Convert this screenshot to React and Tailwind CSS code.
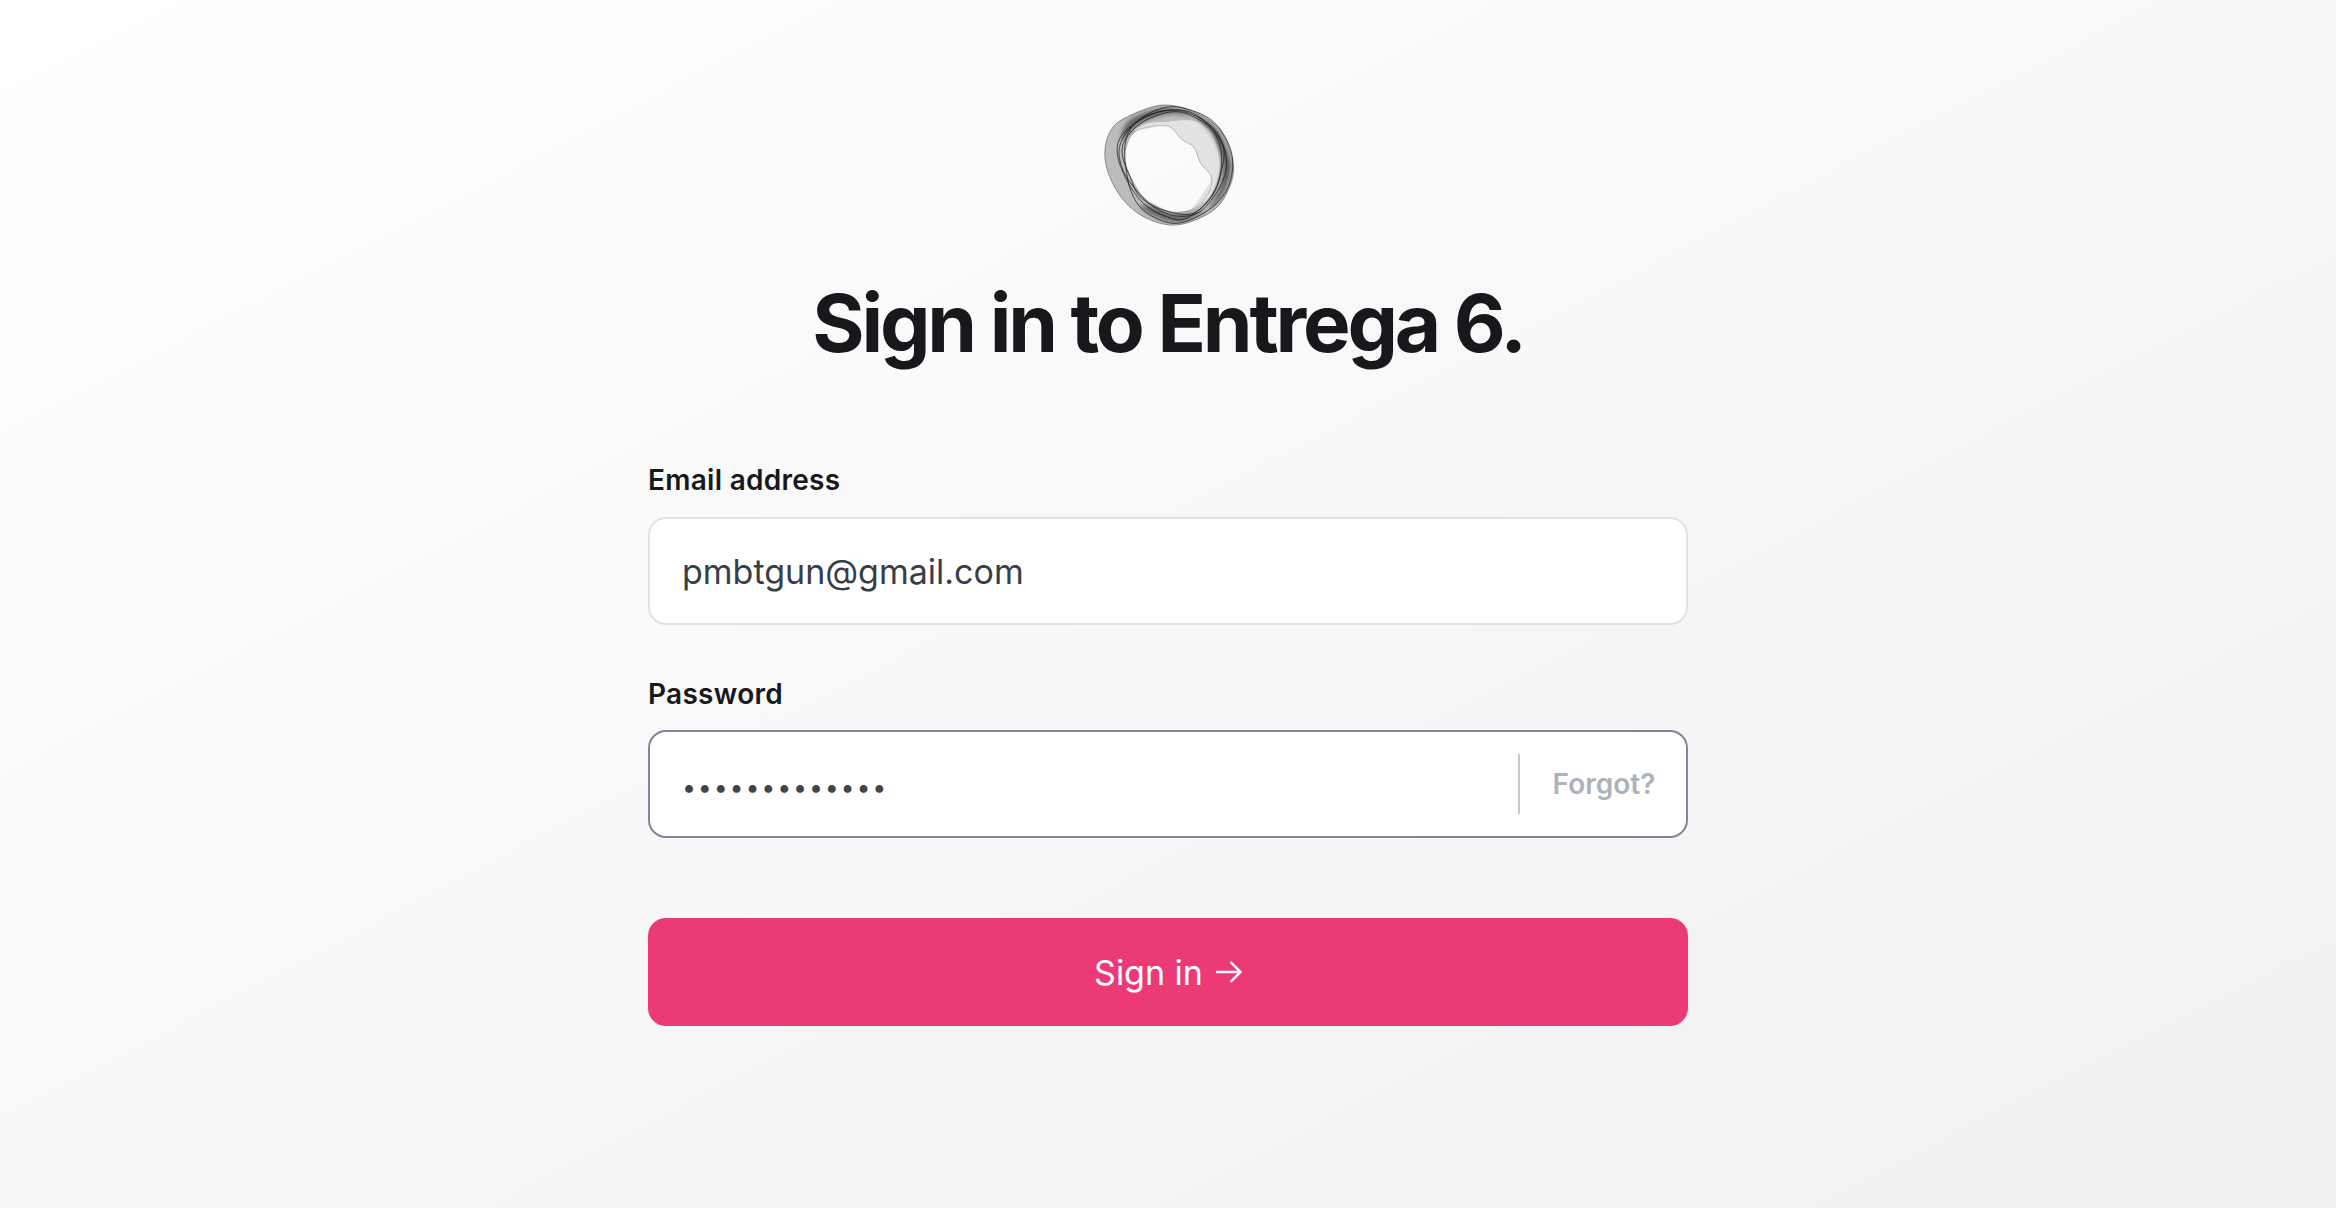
import React from "react";

function smooth(p) {
  const n = p.length;
  let d = `M${p[0][0]} ${p[0][1]}`;
  for (let i = 0; i < n; i++) {
    const a = p[(i - 1 + n) % n], b = p[i], c = p[(i + 1) % n], e = p[(i + 2) % n];
    d += ` C${b[0] + (c[0] - a[0]) / 6} ${b[1] + (c[1] - a[1]) / 6} ${c[0] - (e[0] - b[0]) / 6} ${c[1] - (e[1] - b[1]) / 6} ${c[0]} ${c[1]}`;
  }
  return d + " Z";
}

const outerPts = [[75,175],[100,110],[160,72],[250,45],[340,65],[420,120],[460,225],[440,310],[390,368],[290,405],[200,385],[130,330],[85,250]];
const innerPts = [[138,175],[170,122],[262,108],[305,148],[342,172],[362,220],[395,262],[382,315],[335,358],[270,365],[200,330],[165,285],[138,225]];
const bandPts = [[162,122],[200,100],[262,95],[340,92],[395,130],[418,205],[412,265],[385,325],[335,358],[362,320],[392,265],[362,220],[342,172],[305,148],[262,108],[200,116]];
const loopPts = [
  [[120,165],[165,100],[250,62],[340,70],[415,140],[440,215],[420,290],[360,365],[290,378],[220,350],[160,290],[125,230]],
  [[112,190],[130,130],[210,75],[300,62],[390,105],[430,170],[425,240],[395,320],[320,385],[260,380],[190,340],[140,270]],
  [[135,150],[190,95],[280,65],[350,85],[405,130],[425,210],[405,300],[340,370],[250,360],[180,320],[150,260],[128,200]],
  [[160,105],[225,62],[300,52],[400,95],[455,190],[445,290],[385,360],[290,400],[205,372],[160,320],[140,250],[135,165]],
];

function Logo() {
  const outer = smooth(outerPts);
  const inner = smooth(innerPts);
  return (
    <svg viewBox="-6 0 540 450" className="w-[180px] h-[150px] block" aria-hidden="true">
      <defs>
        <filter id="soft" x="-10%" y="-10%" width="120%" height="120%">
          <feGaussianBlur stdDeviation="1.1" />
        </filter>
        <filter id="softer" x="-10%" y="-10%" width="120%" height="120%">
          <feGaussianBlur stdDeviation="6" />
        </filter>
      </defs>
      <path d={outer + " " + inner} fillRule="evenodd" fill="#bcbcbc" filter="url(#soft)" />
      <path d={smooth(bandPts)} fill="#e2e2e2" filter="url(#soft)" />
      <path d={smooth([[340,72],[410,120],[452,220],[432,305],[385,358],[422,290],[428,210],[395,130]])} fill="#222" opacity="0.65" filter="url(#softer)" />
      <path d={smooth([[180,350],[240,385],[300,395],[375,365],[330,372],[270,372],[215,350]])} fill="#222" opacity="0.6" filter="url(#softer)" />
      <path d={smooth([[150,90],[250,55],[340,75],[260,72],[180,100],[125,150]])} fill="#222" opacity="0.6" filter="url(#softer)" />
      <path d={outer} fill="none" stroke="#222" strokeOpacity="0.4" strokeWidth="3" filter="url(#soft)" />
      <path d={inner} fill="none" stroke="#222" strokeOpacity="0.3" strokeWidth="2" filter="url(#soft)" />
      {loopPts.map((p, i) => (
        <path key={i} d={smooth(p)} fill="none" stroke="#141414" strokeOpacity={0.7} strokeWidth={3} filter="url(#soft)" />
      ))}
    </svg>
  );
}

export default function App() {
  return (
    <div className="min-h-[1208px] bg-gradient-to-br from-white to-[#f0f0f0] font-['Inter',sans-serif] flex flex-col items-center pt-[90px]">
      <Logo />
      <h1 className="mt-[35px] text-[80px] leading-[96px] font-bold tracking-[-0.04em] text-[#17181b] whitespace-nowrap">
        Sign in to Entrega 6.
      </h1>
      <form className="w-[1040px] mt-[92px] flex flex-col">
        <label className="text-[28px] leading-[34px] font-semibold tracking-[0.01em] text-[#18191b]">Email address</label>
        <input
          readOnly
          value="pmbtgun@gmail.com"
          className="mt-[20px] h-[108px] w-full bg-white border-2 border-[#e2e2e4] rounded-[18px] px-[32px] text-[34px] text-[#383e47] outline-none"
        />
        <label className="mt-[52px] text-[28px] leading-[34px] font-semibold tracking-[0.01em] text-[#18191b]">Password</label>
        <div className="mt-[19px] h-[108px] w-full bg-white border-2 border-[#7d8898] rounded-[18px] flex items-center">
          <input
            readOnly
            type="password"
            value="1234567890123"
            className="flex-1 min-w-0 h-full bg-transparent pl-[32px] pt-[6px] text-[25px] tracking-[1.8px] text-[#444] outline-none"
          />
          <div className="w-[2px] h-[60px] bg-[#c8c8c8]" />
          <span className="w-[166px] text-center pl-[2px] text-[28px] font-semibold text-[#adb3bd]">Forgot?</span>
        </div>
        <button type="button" className="mt-[80px] h-[108px] w-full bg-[#ec3a76] rounded-[18px] text-white text-[34px] flex items-center justify-center gap-[13px]">
          <span>Sign in</span>
          <svg viewBox="0 0 26 22" className="w-[26px] h-[22px]" fill="none" stroke="currentColor" strokeWidth="2.4" aria-hidden="true">
            <path d="M0 11 H24.5 M14.5 1 L24.5 11 L14.5 21" />
          </svg>
        </button>
      </form>
    </div>
  );
}
